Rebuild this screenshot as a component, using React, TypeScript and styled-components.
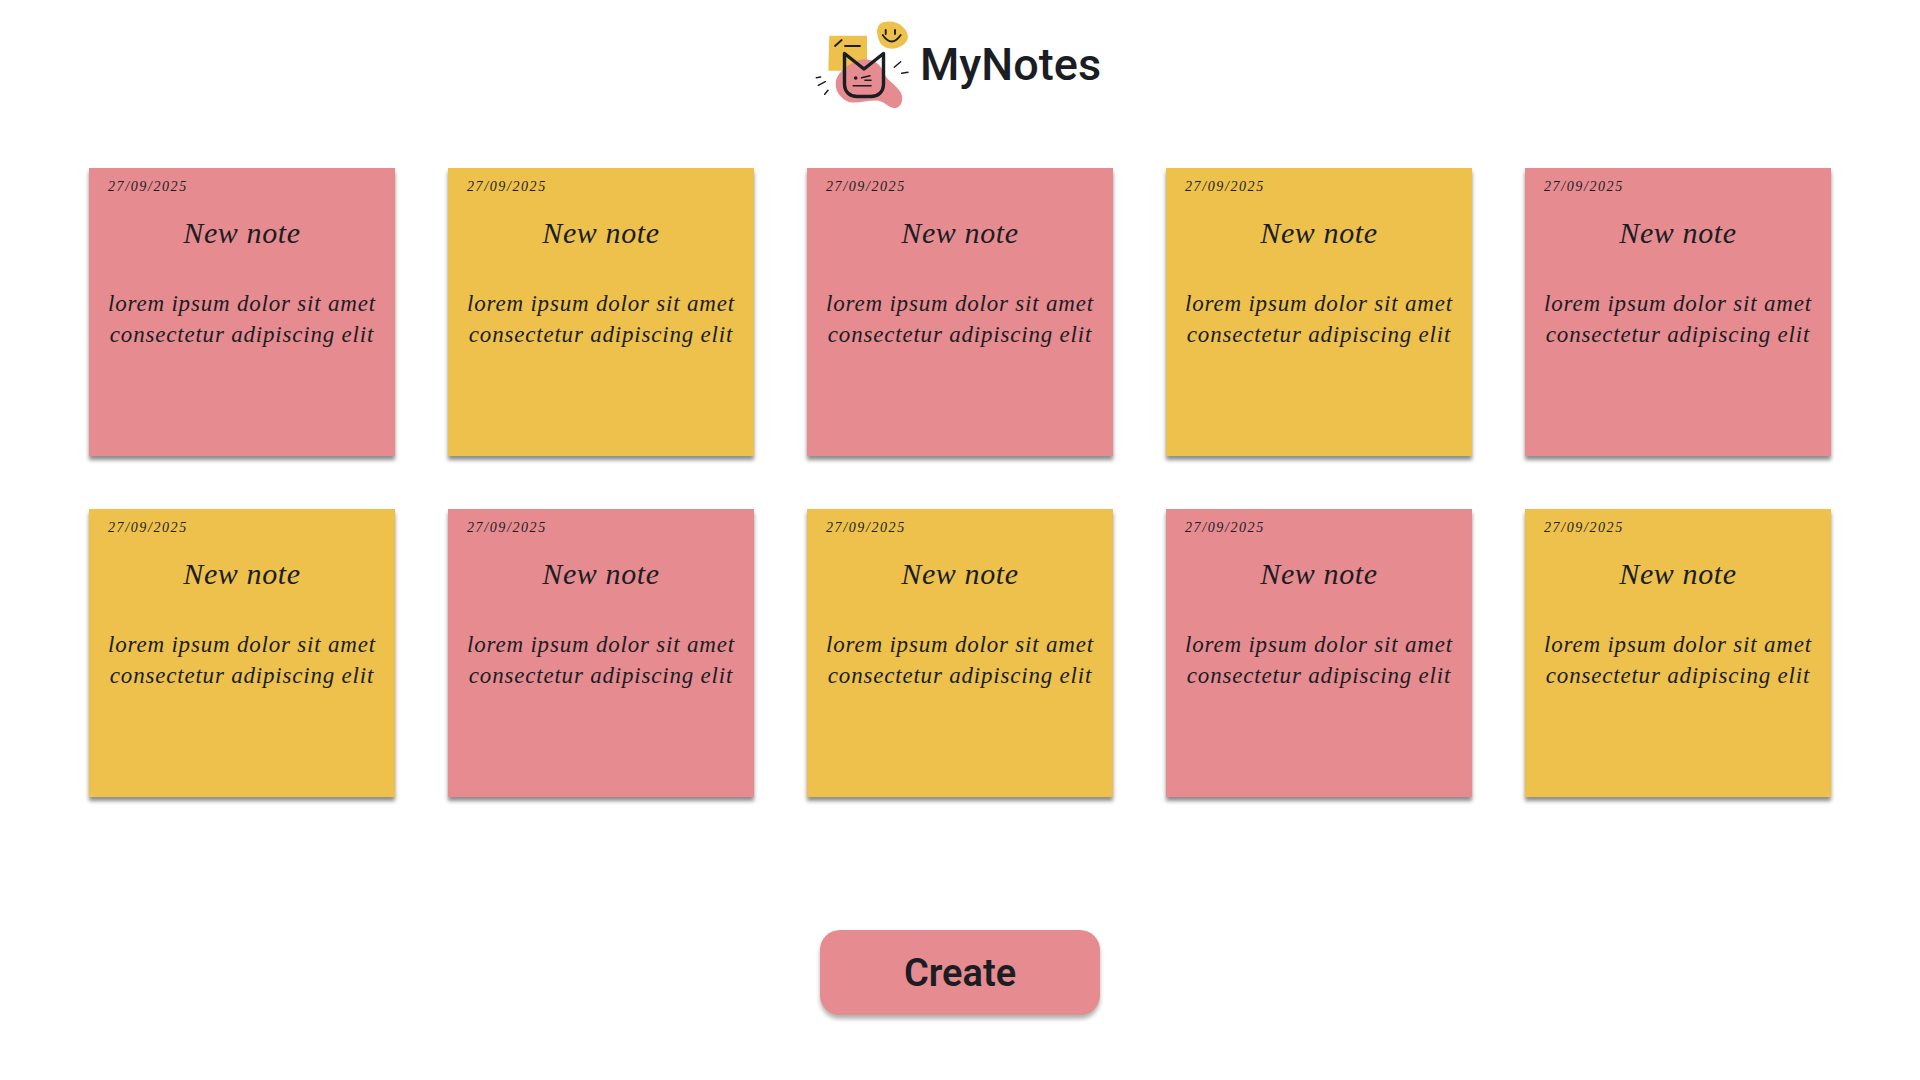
import React from "react";
import styled, { createGlobalStyle } from "styled-components";

const Global = createGlobalStyle`
  html, body { margin: 0; background: #fff; }
  body { font-family: Roboto, "Liberation Sans", sans-serif; color: #1a1d24; }
`;
const Page = styled.div`
  width: 1920px;
  height: 1080px;
  display: flex;
  flex-direction: column;
  align-items: center;
  overflow: hidden;
`;
const Header = styled.header`
  display: flex;
  align-items: center;
  gap: 5px;
  height: 100px;
  margin-top: 15px;
  padding-right: 14px;
`;
const Brand = styled.h1`
  margin: 0;
  padding-bottom: 2px;
  font-size: 45px;
  font-weight: 500;
  line-height: 1;
  color: #1a1d24;
`;
const Grid = styled.main`
  display: grid;
  grid-template-columns: repeat(5, 306px);
  grid-auto-rows: 288px;
  gap: 53px;
  margin-top: 53px;
`;
const Card = styled.article<{ $tone: "pink" | "yellow" }>`
  background: ${(p) => (p.$tone === "pink" ? "#e68b8f" : "#edc14b")};
  box-shadow: 0 4px 4px rgba(0, 0, 0, 0.45);
  padding: 10px 19px;
  box-sizing: border-box;
  font-family: "Liberation Serif", serif;
  font-style: italic;
  color: #1a1d24;
`;
const DateLabel = styled.div`
  font-size: 14px;
  line-height: 17px;
  letter-spacing: 1.6px;
`;
const Title = styled.h2`
  margin: 20px 0 0;
  font-size: 30px;
  line-height: 36px;
  font-weight: 400;
  text-align: center;
  letter-spacing: 0.6px;
`;
const Body = styled.p`
  margin: 38px 0 0;
  font-size: 23px;
  line-height: 30.6px;
  text-align: center;
  letter-spacing: 0.8px;
`;
const Footer = styled.div`
  margin-top: 133px;
`;
const CreateButton = styled.button`
  display: block;
  width: 280px;
  height: 85px;
  border: 0;
  border-radius: 20px;
  background: #e68b8f;
  box-shadow: 0 4px 4px rgba(0, 0, 0, 0.3);
  font-family: Roboto, "Liberation Sans", sans-serif;
  font-size: 38px;
  font-weight: 600;
  color: #1a1d24;
`;

function Logo() {
  return (
    <svg width="110" height="100" viewBox="0 0 110 100" fill="none" aria-hidden="true">
      <path d="M24.300 20.700 L62 20.700 L62 55.700 L23.300 55.700 Z" fill="#edc14b" />
      <path d="M75 9 C81 5 92 6 98 12 C104 18 105 25 98 30 C91 35 81 35 76 29 C72 23 70 13 75 9 Z" fill="#edc14b" />
      <path d="M40 53 C47 48 53 44 60 44.300 C70 45 76 50 79 58 C82 66 92 70 96 78 C99 85 96 92 91 93 C84 94 80 86 72 85.500 C62 85 52 89 44 87 C36 84 30 76 30.700 68 C31 62 35 57 40 53 Z" fill="#e68b8f" />
      <path d="M39.500 38.500 L39.500 69 C39.500 77 45 81.500 52 81.500 L66 81.500 C73 81.500 78.500 77 78.500 69 L78.500 38.500 L59 54 Z" stroke="#1a1d24" strokeWidth="3.4" strokeLinejoin="round" strokeLinecap="round" />
      <circle cx="50.700" cy="63" r="1.800" fill="#1a1d24" />
      <path d="M56.700 62.700 L65 60.700 M60 65.300 L66 65.300 M48.300 70.700 L66 70.700" stroke="#1a1d24" strokeWidth="1.6" strokeLinecap="round" />
      <path d="M30 31 L36.700 25 M40 31 L55 31" stroke="#1a1d24" strokeWidth="1.800" strokeLinecap="round" />
      <path d="M80.700 15 L80.700 19 M90 15 L90 19" stroke="#1a1d24" strokeWidth="1.900" strokeLinecap="round" />
      <path d="M77.700 20 Q86.700 33 95.700 20" stroke="#1a1d24" strokeWidth="1.800" strokeLinecap="round" />
      <path d="M89.300 52.300 L95.700 46.700 M96.700 58.300 L103 57.300 M11.300 62.700 L15.700 62 M13.300 70.300 L20.300 66.700 M19.700 79.300 L23 75.300" stroke="#1a1d24" strokeWidth="1.500" strokeLinecap="round" />
    </svg>
  );
}

const tones: ("pink" | "yellow")[] = ["pink", "yellow", "pink", "yellow", "pink", "yellow", "pink", "yellow", "pink", "yellow"];

export default function App() {
  return (
    <Page>
      <Global />
      <Header>
        <Logo />
        <Brand>MyNotes</Brand>
      </Header>
      <Grid>
        {tones.map((tone, i) => (
          <Card key={i} $tone={tone}>
            <DateLabel>27/09/2025</DateLabel>
            <Title>New note</Title>
            <Body>lorem ipsum dolor sit amet consectetur adipiscing elit</Body>
          </Card>
        ))}
      </Grid>
      <Footer>
        <CreateButton>Create</CreateButton>
      </Footer>
    </Page>
  );
}
